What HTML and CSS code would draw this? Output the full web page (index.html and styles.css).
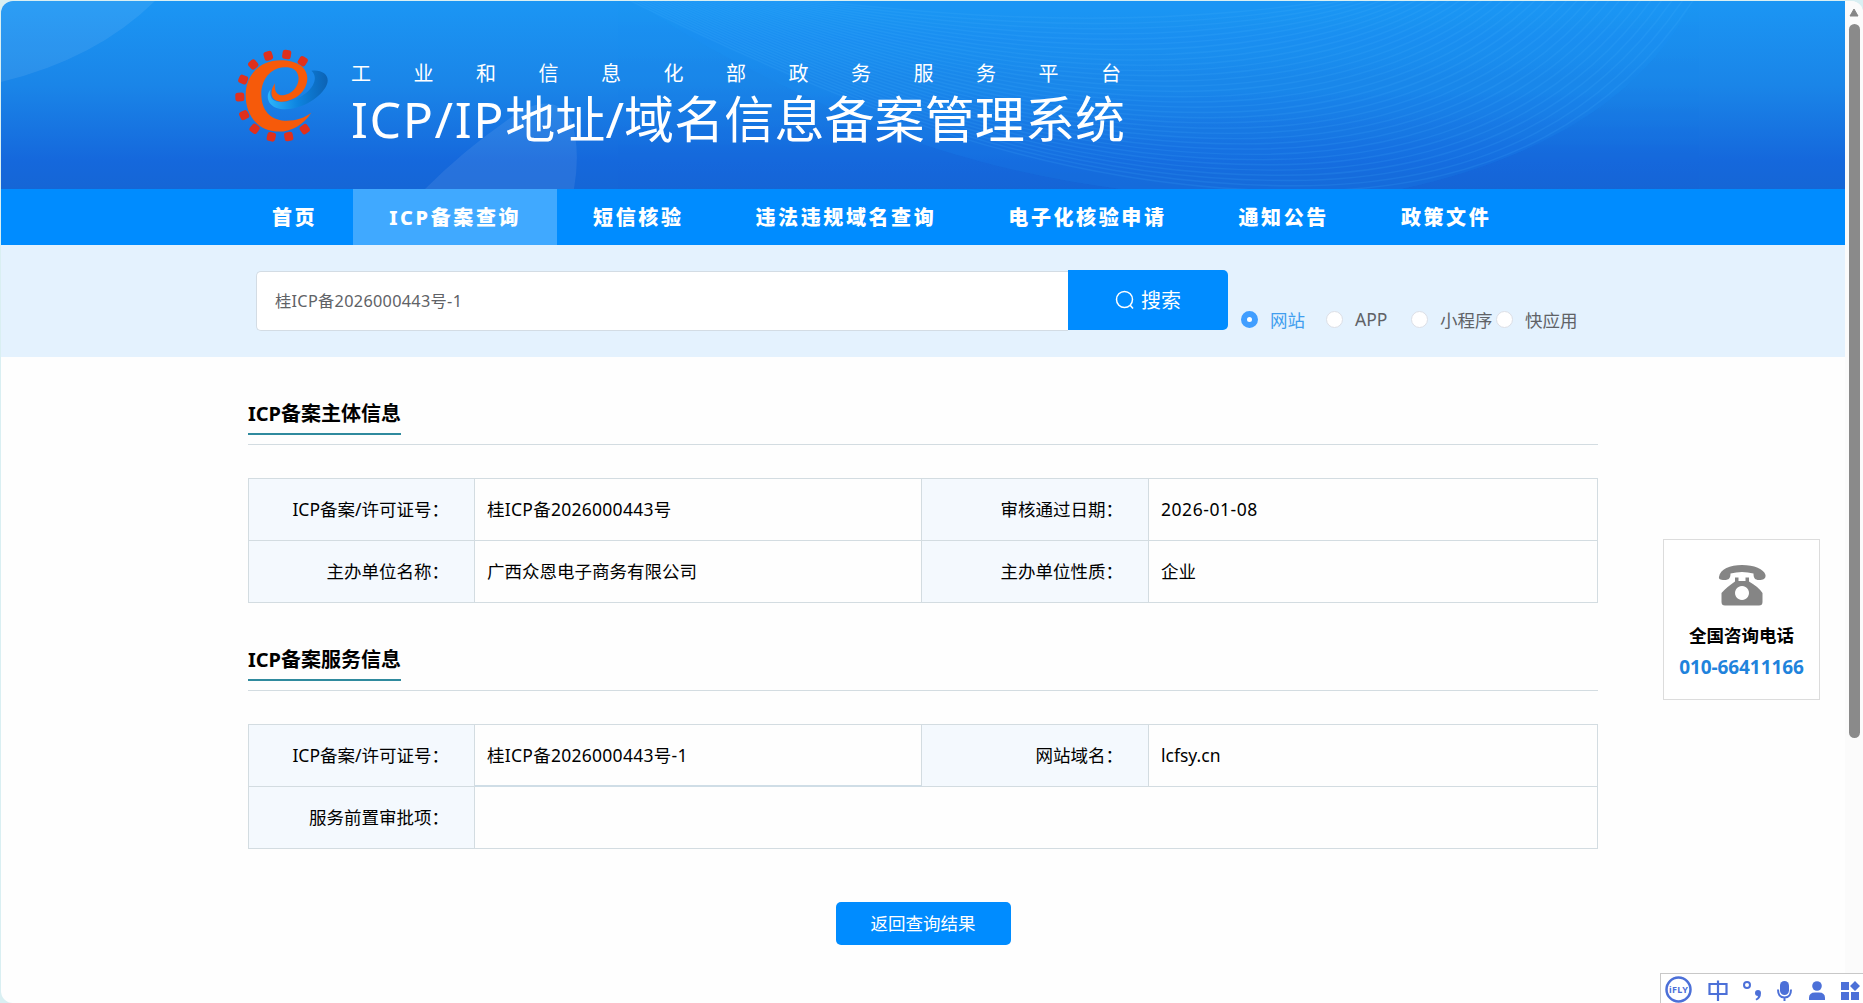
FILE: index.html
```html
<!DOCTYPE html>
<html lang="zh-CN">
<head>
    <meta charset="UTF-8">
    <meta name="viewport" content="width=device-width, initial-scale=1.0">
    <title>ICP/IP地址/域名信息备案管理系统</title>
    <link rel="stylesheet" href="styles.css">
</head>
<body>
    <div class="window">
        <div class="page">
            <header class="banner">
                <svg class="banner-bg" viewBox="0 0 1844 188" preserveAspectRatio="none">
                    <path d="M0 0H154Q95 58 0 81Z" fill="#fff" opacity=".08"/>
                    <path d="M424 188Q462 150 505 120Q550 86 570 118Q580 148 573 188Z" fill="#fff" opacity=".08"/>
                    <path d="M635 0Q700 50 860 120Q980 170 1120 188H1400Q1620 140 1692 0Z" fill="#1f9cff" opacity=".12"/>
                    <g id="waves"></g>
                </svg>
                <div class="brand">
                    <svg class="logo" viewBox="45 57 282 282">
                        <defs>
                            <linearGradient id="swoosh" x1="0" x2="1">
                                <stop offset="0" stop-color="#2db4fa"/>
                                <stop offset=".5" stop-color="#0d84e0"/>
                                <stop offset="1" stop-color="#0c62b4"/>
                            </linearGradient>
                        </defs>
                        <g class="teeth" id="teeth"></g>
                        <path d="M274 122C312 118 331 140 320 165C304 204 232 247 178 236C142 229 135 196 152 178C146 204 160 218 190 216C240 212 280 178 284 150C286 138 282 129 274 122Z" fill="url(#swoosh)"/>
                        <path d="M274 248C246 290 205 309 163 304C108 297 77 251 77 196C77 134 119 91 182 91C229 91 262 111 262 145C262 186 220 217 182 215C153 213 146 188 165 160C162 185 171 197 190 196C217 193 240 166 235 139C231 118 214 111 192 112C151 115 124 149 124 193C124 240 151 271 194 272C229 273 253 263 274 248Z" fill="#f65a0a"/>
                    </svg>
                    <div class="brand-text">
                        <p class="platform">工业和信息化部政务服务平台</p>
                        <h1 class="system"><span class="lat">ICP/IP</span>地址/域名信息备案管理系统</h1>
                    </div>
                </div>
            </header>

            <nav class="nav">
                <a>首页</a>
                <a class="active">ICP备案查询</a>
                <a>短信核验</a>
                <a>违法违规域名查询</a>
                <a>电子化核验申请</a>
                <a>通知公告</a>
                <a>政策文件</a>
            </nav>

            <div class="search">
                <div class="search-input">桂ICP备2026000443号-1</div>
                <div class="search-btn">
                    <svg width="20" height="20" viewBox="0 0 20 20" fill="none" stroke="#fff" stroke-width="1.5"><circle cx="9.5" cy="9.5" r="8"/><path d="M15 15l3 3.5"/></svg>
                    <span>搜索</span>
                </div>
                <div class="types">
                    <label class="type checked"><i></i>网站</label>
                    <label class="type"><i></i>APP</label>
                    <label class="type"><i></i>小程序</label>
                    <label class="type"><i></i>快应用</label>
                </div>
            </div>

            <main class="content">
                <section class="block">
                    <div class="block-head"><h2>ICP备案主体信息</h2></div>
                    <div class="info">
                        <div class="label">ICP备案/许可证号：</div>
                        <div class="value num">桂ICP备2026000443号</div>
                        <div class="label">审核通过日期：</div>
                        <div class="value date">2026-01-08</div>
                        <div class="label">主办单位名称：</div>
                        <div class="value">广西众恩电子商务有限公司</div>
                        <div class="label">主办单位性质：</div>
                        <div class="value">企业</div>
                    </div>
                </section>
                <section class="block">
                    <div class="block-head"><h2>ICP备案服务信息</h2></div>
                    <div class="info">
                        <div class="label">ICP备案/许可证号：</div>
                        <div class="value num thick">桂ICP备2026000443号-1</div>
                        <div class="label">网站域名：</div>
                        <div class="value">lcfsy.cn</div>
                        <div class="label">服务前置审批项：</div>
                        <div class="value wide"></div>
                    </div>
                </section>
                <div class="back"><a class="back-btn">返回查询结果</a></div>
            </main>
        </div>

        <div class="scrollbar">
            <svg width="10" height="9" viewBox="0 0 10 9"><path d="M5 1L9 8H1Z" fill="#868686" stroke="#868686" stroke-linejoin="round"/></svg>
            <div class="thumb"></div>
        </div>
    </div>

    <div class="phone-card">
        <svg width="48" height="42" viewBox="0 0 48 42" fill="#858585">
            <path d="M1 13C2 5 12 1 24 1S46 5 47.500 11C48 15 45 16 41 16C37 16 35.500 14 35.500 9.500C28 7.500 20 7.500 12.500 9.500C12.500 14 11 16 6.500 16C2 16 0.500 15 1 13Z"/>
            <path fill-rule="evenodd" d="M17 13.500h3.500v3.500h7v-3.500h3.500v4C37 21 42 25 44.500 29V38Q44.500 41.500 41 41.500H7Q3.500 41.500 3.500 38V29C7 25 12 21 17 17.500ZM24 22a7 7 0 1 0 .01 0Z"/>
        </svg>
        <p class="phone-title">全国咨询电话</p>
        <p class="phone-num">010-66411166</p>
    </div>

    <div class="ime">
        <svg width="203" height="30" viewBox="1 1 203 30" fill="#4c70d8">
            <circle cx="18.500" cy="16.500" r="12" fill="none" stroke="#4c70d8" stroke-width="2.500"/>
            <text x="18.500" y="20" text-anchor="middle" class="ime-logo" textLength="19">iFLY</text>
            <path d="M49.500 11H66.500V21H49.500ZM58 7.500V28" fill="none" stroke="#4c70d8" stroke-width="2.200"/>
            <circle cx="87" cy="12" r="3" fill="none" stroke="#4c70d8" stroke-width="2"/>
            <path d="M95.500 26Q98 25 98 23A3 3 0 1 1 101 20Q101 25.500 96.500 27.500Z"/>
            <rect x="120" y="8" width="9" height="14" rx="4.500"/>
            <path d="M118 16.500Q118 24.500 124.500 24.500T131 16.500M124.500 24.500V28" fill="none" stroke="#4c70d8" stroke-width="2"/>
            <circle cx="157" cy="13" r="4.800"/>
            <path d="M149 27V25Q149 19.500 155 19.500H159Q165 19.500 165 25V27Z"/>
            <path d="M181 9h8v8h-8zM181 19h8v8h-8zM191 19h8v8h-8zM195 8l5 5-5 5-5-5z"/>
        </svg>
    </div>

    <script>
        const NS = 'http://www.w3.org/2000/svg';

        // fan of thin curves behind the title, from the outer curve to the inner one
        const outer = [620, -5, 850, 110, 1060, 190, 1300, 190, 1500, 190, 1620, 110, 1695, -5];
        const inner = [780, -5, 880, 5, 980, 12, 1080, 12, 1180, 12, 1280, 5, 1340, -5];
        const waves = document.getElementById('waves');
        for (let i = 0; i < 34; i++) {
            const t = i / 34;
            const p = outer.map((v, k) => (v + (inner[k] - v) * t).toFixed(1));
            const path = document.createElementNS(NS, 'path');
            path.setAttribute('d', `M${p[0]} ${p[1]}C${p.slice(2, 8).join(' ')} ${p.slice(8).join(' ')}`);
            waves.appendChild(path);
        }

        // gear teeth of the logo
        const teeth = [[145, 78], [200, 74], [248, 94], [100, 104], [70, 149], [60, 201], [73, 255], [104, 296], [154, 320], [206, 319], [254, 297]];
        teeth.forEach(([x, y]) => {
            const r = document.createElementNS(NS, 'rect');
            const a = Math.atan2(y - 197, x - 182) * 180 / Math.PI;
            r.setAttribute('x', x - 13);
            r.setAttribute('y', y - 13);
            r.setAttribute('width', 27);
            r.setAttribute('height', 26);
            r.setAttribute('rx', 8);
            r.setAttribute('transform', `rotate(${a} ${x} ${y})`);
            document.getElementById('teeth').appendChild(r);
        });
    </script>
</body>
</html>
```
FILE: styles.css
```css
* {
    box-sizing: border-box;
}
body, html {
    margin: 0;
    padding: 0;
    height: 100%;
    overflow: hidden;
    background: #d9eff2;
    font-family: "Noto Sans", "Noto Sans CJK SC", sans-serif;
    font-size: 17.5px;
    color: #000;
}
h1, h2, p {
    margin: 0;
}
.window {
    display: flex;
    height: 1002px;
    margin: 1px 0 0 1px;
    border-radius: 12px;
    overflow: hidden;
    background: #fefefe;
}
.page {
    width: 1844px;
}

/* banner */
.banner {
    position: relative;
    height: 188px;
    background: linear-gradient(#1b96f4, #1a85e8 45%, #1568dc 85%, #1566d6);
}
.banner-bg {
    position: absolute;
    inset: 0;
    width: 100%;
    height: 100%;
}
#waves {
    fill: none;
    stroke: #4bb5ff;
    stroke-width: 1.4;
    opacity: .14;
}
.brand {
    position: relative;
    display: flex;
    padding: 48px 0 0 234px;
}
.logo {
    width: 94px;
    height: 94px;
}
.teeth {
    fill: #e0301c;
}
.brand-text {
    padding: 11px 0 0 22px;
    color: #fff;
    white-space: nowrap;
}
.platform {
    font-size: 20px;
    line-height: 28px;
    letter-spacing: 42.5px;
}
.system {
    font-size: 50px;
    font-weight: 400;
    line-height: 62px;
    letter-spacing: .1px;
}
.lat {
    letter-spacing: 1.6px;
}

/* nav */
.nav {
    display: flex;
    height: 56px;
    padding-left: 235px;
    background: #008cff;
}
.nav a {
    padding: 1px 36px 0;
    color: #fff;
    font-size: 20px;
    font-weight: 800;
    letter-spacing: 2.6px;
    line-height: 56px;
    white-space: nowrap;
}
.nav .active {
    background: #40a9ff;
}

/* search */
.search {
    display: flex;
    height: 112px;
    padding: 25px 0 0 255px;
    background: #e4f2fe;
}
.search-input {
    width: 812px;
    height: 60px;
    margin-top: 1px;
    padding-left: 18px;
    border: 1px solid #d3dce4;
    border-right: 0;
    border-radius: 5px 0 0 5px;
    background: #fff;
    color: #606266;
    font-size: 16.25px;
    letter-spacing: .3px;
    line-height: 58px;
}
.search-btn {
    display: flex;
    align-items: center;
    justify-content: center;
    gap: 6px;
    width: 160px;
    height: 60px;
    padding-bottom: 1px;
    border-radius: 0 5px 5px 0;
    background: #008cff;
    color: #fff;
    font-size: 20px;
}
.types {
    display: flex;
    padding: 37px 0 0 13px;
}
.type {
    display: flex;
    align-items: center;
    width: 85px;
    height: 24px;
    color: #606266;
    white-space: nowrap;
}
.type i {
    flex: none;
    width: 17px;
    height: 17px;
    margin-right: 12px;
    border: 1px solid #dcdfe6;
    border-radius: 50%;
    background: #fff;
}
.type.checked {
    color: #409eef;
}
.type.checked i {
    border: 6px solid #409eff;
}

/* content */
.content {
    width: 1350px;
    margin-left: 247px;
    padding-top: 40px;
}
.block {
    height: 246px;
}
.block-head {
    height: 48px;
    border-bottom: 1px solid #d3dce1;
}
.block-head h2 {
    display: inline-block;
    height: 38px;
    border-bottom: 2px solid #2f8a9e;
    font-size: 20px;
    font-weight: 700;
    line-height: 33px;
}
.info {
    display: grid;
    grid-template-columns: 226px 447px 227px 449px;
    grid-auto-rows: 62px;
    margin-top: 33px;
    border-top: 1px solid #d3dce1;
    border-left: 1px solid #d3dce1;
    width: 1350px;
}
.info > div {
    border-right: 1px solid #d3dce1;
    border-bottom: 1px solid #d3dce1;
    line-height: 61px;
    white-space: nowrap;
}
.info .label {
    padding-right: 25px;
    background: #f4f9fe;
    text-align: right;
}
.value {
    padding-left: 12px;
}
.num {
    letter-spacing: .27px;
}
.date {
    letter-spacing: .55px;
}
.info .thick {
    border-bottom: 2px solid #cfdde6;
}
.wide {
    grid-column: span 3;
}
.back {
    display: flex;
    justify-content: center;
    padding-top: 13px;
}
.back-btn {
    width: 175px;
    height: 43px;
    border-radius: 5px;
    background: #008cff;
    color: #fff;
    line-height: 43px;
    text-align: center;
}

/* scrollbar */
.scrollbar {
    display: flex;
    flex-direction: column;
    align-items: center;
    width: 18px;
    padding-top: 7px;
    background: #fbfbfb;
}
.thumb {
    width: 11px;
    height: 714px;
    margin-top: 7px;
    border-radius: 6px;
    background: #8a8a8a;
}

/* floating boxes */
.phone-card {
    position: fixed;
    left: 1663px;
    top: 539px;
    display: flex;
    flex-direction: column;
    align-items: center;
    width: 157px;
    height: 161px;
    padding-top: 24px;
    border: 1px solid #dcdcdc;
    background: #fff;
}
.phone-title {
    margin-top: 13px;
    font-weight: 700;
    line-height: 32px;
}
.phone-num {
    color: #1f83dc;
    font-size: 19px;
    font-weight: 700;
    line-height: 33px;
    letter-spacing: -.1px;
}
.ime {
    position: fixed;
    left: 1660px;
    top: 973px;
    width: 203px;
    height: 30px;
    overflow: hidden;
    border-top: 1px solid #c8c8c8;
    border-left: 1px solid #c8c8c8;
    background: #fff;
}
.ime-logo {
    font: 700 9px "Noto Sans", sans-serif;
}
```
